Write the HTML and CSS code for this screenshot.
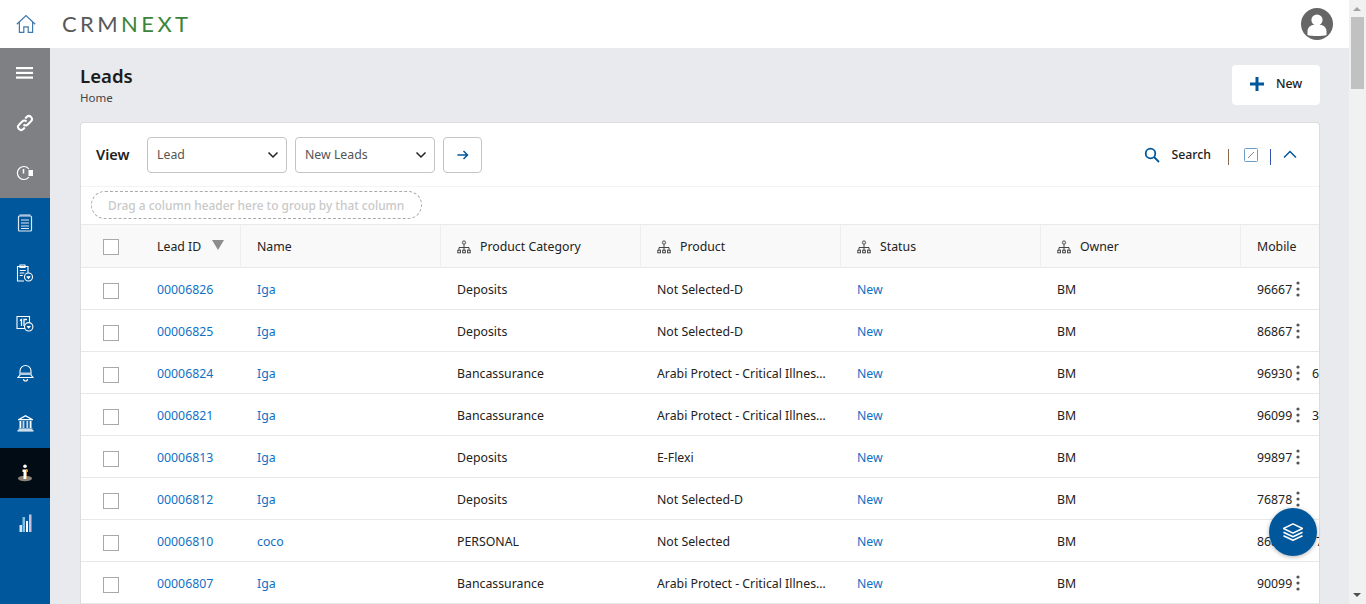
FILE: index.html
```html
<!DOCTYPE html>
<html lang="en">

<head>
    <meta charset="UTF-8">
    <meta name="viewport" content="width=device-width, initial-scale=1.0">
    <title>Leads - CRMNEXT</title>
    <link rel="stylesheet" href="styles.css">
</head>

<body>
    <svg class="iconDefs" xmlns="http://www.w3.org/2000/svg">
        <symbol id="tree" viewBox="0 0 14 14">
            <g fill="none" stroke="#444" stroke-width="1">
                <circle cx="7" cy="2.5" r="1.6"/>
                <path d="M7 4v3M2 10V7.5h10V10M7 7v3"/>
                <rect x="0.8" y="10.2" width="2.6" height="2.6"/>
                <rect x="5.7" y="10.2" width="2.6" height="2.6"/>
                <rect x="10.6" y="10.2" width="2.6" height="2.6"/>
            </g>
        </symbol>
        <symbol id="kebab" viewBox="0 0 6 16">
            <circle cx="3" cy="2" r="1.6" fill="#555"/>
            <circle cx="3" cy="8" r="1.6" fill="#555"/>
            <circle cx="3" cy="14" r="1.6" fill="#555"/>
        </symbol>
        <symbol id="chevron" viewBox="0 0 12 8">
            <path d="M1.5 1.5L6 6l4.5-4.5" fill="none" stroke="#222" stroke-width="1.5"/>
        </symbol>
    </svg>

    <div class="appShell">
        <div class="appWindow">
            <header class="topBar">
                <a class="homeLink" href="#">
                    <svg width="20" height="20" viewBox="0 0 20 20" fill="none" stroke="#3f78ad" stroke-width="1.2">
                        <path d="M0.8 10.2L10 1.6l9.2 8.6M3.4 8.2V18.4h4.4v-5.6h4.4v5.6h4.4V8.2"/>
                    </svg>
                </a>
                <div class="logo"><span class="logoCrm">CRM</span><span class="logoNext">NEXT</span></div>
                <div class="avatar">
                    <svg width="32" height="32" viewBox="0 0 32 32">
                        <circle cx="16" cy="16" r="16" fill="#666"/>
                        <circle cx="16" cy="12" r="5.6" fill="#fff"/>
                        <path d="M6.5 27v-3.5c0-4 3-6.5 6-6.5h7c3 0 6 2.500 6 6.500V27c-2 1.300-17 1.300-19 0z" fill="#fff"/>
                    </svg>
                </div>
            </header>

            <div class="appBody">
                <nav class="sideNav">
                    <div class="navGroup navGrey">
                        <a class="navItem" href="#">
                            <svg width="18" height="14" viewBox="0 0 18 14" fill="#fff"><rect y="1" width="17" height="2.200"/><rect y="5.800" width="17" height="2.200"/><rect y="10.500" width="17" height="2.200"/></svg>
                        </a>
                        <a class="navItem" href="#">
                            <svg width="18" height="18" viewBox="0 0 18 18" fill="none" stroke="#fff" stroke-width="2"><path d="M7.500 10.500a3 3 0 0 0 4.300 0l3.200-3.200a3 3 0 0 0-4.300-4.300L9.200 4.500"/><path d="M10.500 7.500a3 3 0 0 0-4.300 0L3 10.700A3 3 0 0 0 7.300 15l1.500-1.500"/></svg>
                        </a>
                        <a class="navItem" href="#">
                            <svg width="18" height="16" viewBox="0 0 18 16" fill="none" stroke="#fff" stroke-width="1.200"><path d="M13 4a6.500 6.500 0 1 0 0 8"/><path d="M7.500 4v4.500" stroke-width="1.500"/><rect x="12.500" y="5" width="4.500" height="6" fill="#fff" stroke="none"/></svg>
                        </a>
                    </div>
                    <div class="navGroup">
                        <a class="navItem" href="#">
                            <svg width="16" height="18" viewBox="0 0 16 18" fill="none" stroke="#dfe9f3" stroke-width="1.200"><rect x="1.500" y="2" width="13" height="15" rx="1"/><path d="M2.500 1h11M4 6h8M4 9h8M4 12h8M4 14.500h8"/></svg>
                        </a>
                        <a class="navItem" href="#">
                            <svg width="18" height="18" viewBox="0 0 18 18" fill="none" stroke="#fff" stroke-width="1.100"><path d="M8 17H1.500V2.500h10.500V9"/><path d="M4 1h5v2.500H4zM3.800 6.500h6M3.800 9h4.500M3.800 11.500h3"/><circle cx="12.500" cy="13" r="4"/><path d="M10.800 12.300l1.700 2 1.700-2" fill="#fff"/></svg>
                        </a>
                        <a class="navItem" href="#">
                            <svg width="18" height="17" viewBox="0 0 18 17" fill="none" stroke="#fff" stroke-width="1.100"><path d="M9 13.500H1V1.500h12.500V7"/><path d="M4 5.500l1.500-1V11M8 11V4.500h3" stroke-width="1.300"/><circle cx="12.700" cy="11.800" r="4.200"/><path d="M11 11l1.700 2 1.700-2" fill="#fff"/></svg>
                        </a>
                        <a class="navItem" href="#">
                            <svg width="17" height="18" viewBox="0 0 17 18" fill="none" stroke="#fff" stroke-width="1.100"><path d="M3 11V7a5.500 5.500 0 0 1 11 0v4l2 2.500H1z"/><path d="M6.500 15a2 2 0 0 0 4 0"/><path d="M3 8.500h11v2.500H3z" fill="#b7cde2" stroke="none"/></svg>
                        </a>
                        <a class="navItem" href="#">
                            <svg width="17" height="18" viewBox="0 0 17 18" fill="#fff"><path d="M8.500 1L16 5.200v1H1v-1zM8.500 2.500L4 5h9z" fill-rule="evenodd"/><rect x="2.500" y="7" width="1.800" height="7"/><rect x="5.600" y="7" width="1.800" height="7" fill="#c5d6e6"/><rect x="9.400" y="7" width="1.800" height="7" fill="#c5d6e6"/><rect x="12.700" y="7" width="1.800" height="7"/><rect x="1.500" y="14.500" width="14" height="1.300"/><rect x="0.500" y="16.200" width="16" height="1.300"/></svg>
                        </a>
                        <a class="navItem navActive" href="#">
                            <svg width="16" height="18" viewBox="0 0 16 18"><ellipse cx="8" cy="14.500" rx="7" ry="2.700" fill="#8a8478"/><circle cx="8" cy="2.300" r="1.800" fill="#fff"/><path d="M5.500 5.500h5v2.500H9.500V15h-3V8H5.500z" fill="#fff"/><path d="M9 5.500h1.500V8H9.500V15H9z" fill="#e5a23a"/></svg>
                        </a>
                        <a class="navItem" href="#">
                            <svg width="13" height="18" viewBox="0 0 13 18"><rect x="0.500" y="11" width="2.500" height="7" fill="#d7e6f2"/><rect x="3.500" y="3" width="2.500" height="15" fill="#7fc0e6"/><rect x="7" y="7" width="2" height="11" fill="#fff"/><rect x="10" y="0.500" width="2.500" height="17.500" fill="#cdbfdc"/></svg>
                        </a>
                    </div>
                </nav>

                <main class="pageContent">
                    <div class="pageHeader">
                        <div>
                            <h1>Leads</h1>
                            <div class="breadcrumb">Home</div>
                        </div>
                        <button class="newBtn">
                            <svg width="14" height="14" viewBox="0 0 14 14" fill="#01579b"><path d="M5.500 0h3v5.500H14v3H8.500V14h-3V8.500H0v-3h5.500z"/></svg>
                            New
                        </button>
                    </div>

                    <section class="gridCard">
                        <div class="gridToolbar">
                            <span class="viewLabel">View</span>
                            <div class="selectBox">Lead <svg width="12" height="8"><use href="#chevron"/></svg></div>
                            <div class="selectBox">New Leads <svg width="12" height="8"><use href="#chevron"/></svg></div>
                            <button class="goBtn">
                                <svg width="12" height="10" viewBox="0 0 12 10" fill="none" stroke="#01579b" stroke-width="1.500"><path d="M0.500 5h10M6.500 1l4 4-4 4"/></svg>
                            </button>
                            <div class="toolbarRight">
                                <svg class="searchIcon" width="16" height="16" viewBox="0 0 16 16" fill="none" stroke="#01579b" stroke-width="1.800"><circle cx="6.500" cy="6.500" r="4.800"/><path d="M10 10l5 5"/></svg>
                                <span class="searchLabel">Search</span>
                                <span class="sepOrange"></span>
                                <svg class="expandIcon" width="14" height="14" viewBox="0 0 14 14" fill="none" stroke="#6d9ccb" stroke-width="1"><rect x="0.500" y="0.500" width="13" height="13" rx="1"/><path d="M4 10l6-6" stroke="#888"/></svg>
                                <span class="sepBlue"></span>
                                <svg class="collapseIcon" width="14" height="9" viewBox="0 0 14 9" fill="none" stroke="#01579b" stroke-width="1.500"><path d="M1 7.500l6-6 6 6"/></svg>
                            </div>
                        </div>

                        <div class="groupBar">
                            <div class="groupHint">Drag a column header here to group by that column</div>
                        </div>

                        <table class="leadGrid">
                            <colgroup>
                                <col class="colCheck"><col class="colId"><col><col><col><col><col><col class="colMobile">
                            </colgroup>
                            <thead>
                                <tr>
                                    <th class="checkCell"><span class="checkbox"></span></th>
                                    <th>Lead ID <span class="sortArrow"></span></th>
                                    <th>Name</th>
                                    <th><svg class="treeIcon" width="14" height="14"><use href="#tree"/></svg>Product Category</th>
                                    <th><svg class="treeIcon" width="14" height="14"><use href="#tree"/></svg>Product</th>
                                    <th><svg class="treeIcon" width="14" height="14"><use href="#tree"/></svg>Status</th>
                                    <th><svg class="treeIcon" width="14" height="14"><use href="#tree"/></svg>Owner</th>
                                    <th>Mobile</th>
                                </tr>
                            </thead>
                            <tbody>
                                <tr>
                                    <td class="checkCell"><span class="checkbox"></span></td>
                                    <td><a href="#">00006826</a></td>
                                    <td><a href="#">Iga</a></td>
                                    <td>Deposits</td>
                                    <td>Not Selected-D</td>
                                    <td><a href="#">New</a></td>
                                    <td>BM</td>
                                    <td class="mobileCell"><span class="mobileNum">96667</span><svg class="kebab" width="6" height="16"><use href="#kebab"/></svg></td>
                                </tr>
                                <tr>
                                    <td class="checkCell"><span class="checkbox"></span></td>
                                    <td><a href="#">00006825</a></td>
                                    <td><a href="#">Iga</a></td>
                                    <td>Deposits</td>
                                    <td>Not Selected-D</td>
                                    <td><a href="#">New</a></td>
                                    <td>BM</td>
                                    <td class="mobileCell"><span class="mobileNum">86867</span><svg class="kebab" width="6" height="16"><use href="#kebab"/></svg></td>
                                </tr>
                                <tr>
                                    <td class="checkCell"><span class="checkbox"></span></td>
                                    <td><a href="#">00006824</a></td>
                                    <td><a href="#">Iga</a></td>
                                    <td>Bancassurance</td>
                                    <td><span class="clip">Arabi Protect - Critical Illness Plan</span></td>
                                    <td><a href="#">New</a></td>
                                    <td>BM</td>
                                    <td class="mobileCell"><span class="mobileNum">96930</span><svg class="kebab" width="6" height="16"><use href="#kebab"/></svg><span class="mobileRest">6</span></td>
                                </tr>
                                <tr>
                                    <td class="checkCell"><span class="checkbox"></span></td>
                                    <td><a href="#">00006821</a></td>
                                    <td><a href="#">Iga</a></td>
                                    <td>Bancassurance</td>
                                    <td><span class="clip">Arabi Protect - Critical Illness Plan</span></td>
                                    <td><a href="#">New</a></td>
                                    <td>BM</td>
                                    <td class="mobileCell"><span class="mobileNum">96099</span><svg class="kebab" width="6" height="16"><use href="#kebab"/></svg><span class="mobileRest">3</span></td>
                                </tr>
                                <tr>
                                    <td class="checkCell"><span class="checkbox"></span></td>
                                    <td><a href="#">00006813</a></td>
                                    <td><a href="#">Iga</a></td>
                                    <td>Deposits</td>
                                    <td>E-Flexi</td>
                                    <td><a href="#">New</a></td>
                                    <td>BM</td>
                                    <td class="mobileCell"><span class="mobileNum">99897</span><svg class="kebab" width="6" height="16"><use href="#kebab"/></svg></td>
                                </tr>
                                <tr>
                                    <td class="checkCell"><span class="checkbox"></span></td>
                                    <td><a href="#">00006812</a></td>
                                    <td><a href="#">Iga</a></td>
                                    <td>Deposits</td>
                                    <td>Not Selected-D</td>
                                    <td><a href="#">New</a></td>
                                    <td>BM</td>
                                    <td class="mobileCell"><span class="mobileNum">76878</span><svg class="kebab" width="6" height="16"><use href="#kebab"/></svg></td>
                                </tr>
                                <tr>
                                    <td class="checkCell"><span class="checkbox"></span></td>
                                    <td><a href="#">00006810</a></td>
                                    <td><a href="#">coco</a></td>
                                    <td>PERSONAL</td>
                                    <td>Not Selected</td>
                                    <td><a href="#">New</a></td>
                                    <td>BM</td>
                                    <td class="mobileCell"><span class="mobileNum">86867</span><svg class="kebab" width="6" height="16"><use href="#kebab"/></svg><span class="mobileRestFar">7</span></td>
                                </tr>
                                <tr>
                                    <td class="checkCell"><span class="checkbox"></span></td>
                                    <td><a href="#">00006807</a></td>
                                    <td><a href="#">Iga</a></td>
                                    <td>Bancassurance</td>
                                    <td><span class="clip">Arabi Protect - Critical Illness Plan</span></td>
                                    <td><a href="#">New</a></td>
                                    <td>BM</td>
                                    <td class="mobileCell"><span class="mobileNum">90099</span><svg class="kebab" width="6" height="16"><use href="#kebab"/></svg></td>
                                </tr>
                            </tbody>
                        </table>
                    </section>
                </main>
            </div>

            <button class="fab">
                <svg width="20" height="18" viewBox="0 0 20 18" fill="none" stroke="#fff" stroke-width="1.500" stroke-linejoin="round"><path d="M10 0.800L19.500 5.500 10 10.200 0.500 5.500z"/><path d="M0.500 9.300L10 13.800l9.500-4.500"/><path d="M0.500 12.800L10 17.300l9.500-4.500"/></svg>
            </button>
        </div>

        <div class="fakeScrollbar">
            <span class="scrollUp"></span>
            <span class="scrollThumb"></span>
            <span class="scrollDown"></span>
        </div>
    </div>
</body>

</html>
```

FILE: styles.css
```css
* {
    box-sizing: border-box;
}

html, body {
    margin: 0;
    height: 100%;
    overflow: hidden;
}

body {
    font-family: "Noto Sans", Arial, sans-serif;
    font-size: 12.3px;
    color: #222;
    background-color: #e9eaee;
}

a {
    color: #1170c4;
    text-decoration: none;
}

button {
    font-family: inherit;
    cursor: pointer;
}

.iconDefs {
    display: none;
}

.appShell {
    display: flex;
    height: 100vh;
}

.appWindow {
    flex: 1;
    position: relative;
    display: flex;
    flex-direction: column;
    min-width: 0;
}

/* Top bar */
.topBar {
    height: 48px;
    flex: none;
    display: flex;
    align-items: center;
    background-color: #fff;
    padding: 0 16px;
}

.homeLink {
    display: flex;
    margin-right: 26px;
}

.logo {
    font-family: Lato, sans-serif;
    font-size: 22px;
    letter-spacing: 3.4px;
    margin-top: -1px;
}

.logoCrm {
    color: #58595b;
}

.logoNext {
    color: #3b8439;
}

.avatar {
    display: flex;
    margin-left: auto;
}

/* Sidebar */
.appBody {
    flex: 1;
    display: flex;
    min-height: 0;
}

.sideNav {
    width: 50px;
    flex: none;
    background-color: #01579b;
}

.navGrey {
    background-color: #7f8083;
}

.navItem {
    height: 50px;
    display: flex;
    align-items: center;
    justify-content: center;
}

.navActive {
    background-color: #020c15;
}

/* Main area */
.pageContent {
    flex: 1;
    min-width: 0;
    padding: 17px 29px 0 30px;
    overflow: hidden;
}

.pageHeader {
    display: flex;
    justify-content: space-between;
    align-items: flex-start;
    height: 57px;
}

h1 {
    margin: -1px 0 0;
    font-size: 18.6px;
    line-height: 24px;
    font-weight: 600;
    color: #1c1c1c;
}

.breadcrumb {
    font-size: 11.5px;
    line-height: 18px;
    margin-top: 1px;
    color: #444;
}

.newBtn {
    width: 88px;
    height: 40px;
    display: flex;
    align-items: center;
    gap: 12px;
    padding: 0 0 3px 18px;
    border: none;
    border-radius: 4px;
    background-color: #fff;
    font-size: 12.3px;
    font-weight: 500;
    color: #222;
}

.gridCard {
    background-color: #fff;
    border: 1px solid #dcdcdf;
    border-bottom: none;
    border-radius: 4px 4px 0 0;
    overflow: hidden;
}

.gridToolbar {
    height: 64px;
    display: flex;
    align-items: center;
    padding: 0 22px 0 15px;
    gap: 8px;
    border-bottom: 1px solid #f3f3f3;
}

.viewLabel {
    font-size: 14.5px;
    font-weight: 600;
    width: 43px;
    padding-bottom: 1px;
}

.selectBox {
    width: 140px;
    height: 36px;
    display: flex;
    align-items: center;
    justify-content: space-between;
    padding: 0 7px 0 9px;
    border: 1px solid #c4c4c4;
    border-radius: 4px;
    color: #555;
}

.goBtn {
    width: 39px;
    height: 36px;
    display: flex;
    align-items: center;
    justify-content: center;
    padding: 0;
    border: 1px solid #c4c4c4;
    border-radius: 4px;
    background-color: #fff;
}

.toolbarRight {
    margin-left: auto;
    display: flex;
    align-items: center;
}

.searchLabel {
    margin-left: 11px;
    font-weight: 500;
}

.sepOrange,
.sepBlue {
    width: 1px;
    height: 16px;
    margin-top: 4px;
}

.sepOrange {
    margin-left: 17px;
    margin-right: 15px;
    background-color: #8a6a4a;
}

.sepBlue {
    margin-left: 12px;
    margin-right: 12px;
    background-color: #3557b0;
}

.groupBar {
    height: 38px;
    padding: 4px 10px;
    border-bottom: 1px solid #eaeaea;
}

.groupHint {
    width: 331px;
    height: 28px;
    line-height: 26px;
    padding-left: 16px;
    border: 1px dashed #aaa;
    border-radius: 14px;
    color: #c9c9c9;
    font-weight: 500;
    font-size: 11.9px;
}

/* Grid */
.leadGrid {
    width: 100%;
    table-layout: fixed;
    border-collapse: separate;
    border-spacing: 0;
}

.colCheck {
    width: 60px;
}

.colId {
    width: 100px;
}

.colMobile {
    width: 78px;
}

.leadGrid th {
    height: 43px;
    padding: 0 16px;
    background-color: #f9f9f9;
    border-right: 1px solid #eee;
    border-bottom: 1px solid #e8e8e8;
    font-weight: 400;
    text-align: left;
    white-space: nowrap;
}

.leadGrid th.checkCell,
.leadGrid th:last-child {
    border-right: none;
}

.leadGrid td {
    height: 42px;
    padding: 2px 12px 0 16px;
    border-bottom: 1px solid #e8e8e8;
    white-space: nowrap;
    overflow: hidden;
}

.leadGrid .checkCell {
    padding: 4px 0 0 22px;
}

.leadGrid th.checkCell {
    padding-top: 2px;
}

.checkbox {
    display: block;
    width: 16px;
    height: 16px;
    border: 1px solid #a9a9a9;
    background-color: #fff;
}

.sortArrow {
    display: inline-block;
    vertical-align: 1px;
    margin-left: 8px;
    border-left: 6.5px solid transparent;
    border-right: 6.5px solid transparent;
    border-top: 10px solid #8d8d8d;
}

.treeIcon {
    vertical-align: -3px;
    margin-right: 9px;
}

.clip {
    display: block;
    overflow: hidden;
    text-overflow: ellipsis;
}

.leadGrid td.mobileCell {
    padding-right: 0;
}

.mobileNum {
    display: inline-block;
    width: 38px;
}

.kebab {
    vertical-align: -3px;
}

.mobileRest {
    margin-left: 11px;
}

.mobileRestFar {
    margin-left: 15px;
}

/* Floating button */
.fab {
    position: absolute;
    left: 1269px;
    top: 508px;
    width: 48px;
    height: 48px;
    display: flex;
    align-items: center;
    justify-content: center;
    padding: 0;
    border: none;
    border-radius: 50%;
    background-color: #01579b;
    box-shadow: 0 1px 4px rgba(0, 0, 0, 0.3);
}

/* Browser scrollbar */
.fakeScrollbar {
    width: 17px;
    flex: none;
    position: relative;
    background-color: #f1f1f1;
}

.scrollThumb {
    position: absolute;
    left: 2px;
    top: 17px;
    width: 13px;
    height: 72px;
    background-color: #c1c1c1;
}

.scrollUp,
.scrollDown {
    position: absolute;
    left: 4px;
    border-left: 4px solid transparent;
    border-right: 4px solid transparent;
}

.scrollUp {
    top: 7px;
    border-bottom: 4px solid #a3a3a3;
}

.scrollDown {
    bottom: 7px;
    border-top: 4px solid #505050;
}
```
